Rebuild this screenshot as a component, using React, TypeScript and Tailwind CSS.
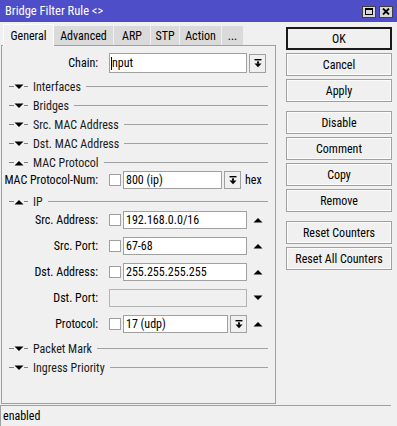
import React from "react";

const font = { fontFamily: '"Roboto Condensed", "Liberation Sans", Arial, sans-serif' };

function DropIcon() {
  return (
    <svg width="8" height="9" viewBox="0 0 8 9">
      <rect x="0.5" y="0" width="7" height="1.4" fill="#000" />
      <rect x="3" y="2.4" width="2" height="2.2" fill="#000" />
      <polygon points="0.5,4.4 7.5,4.4 4,8.2" fill="#000" />
    </svg>
  );
}

function Tri({ up }: { up?: boolean }) {
  return (
    <svg width="10" height="6" viewBox="0 0 10 6">
      {up ? (
        <polygon points="0.5,5.5 9.5,5.5 5,1" fill="#000" />
      ) : (
        <polygon points="0.5,0.5 9.5,0.5 5,5" fill="#000" />
      )}
    </svg>
  );
}

function DropBtn() {
  return (
    <div className="w-[17px] h-[19px] border border-[#a0a0a0] bg-[#f0f0f0] flex items-center justify-center shrink-0">
      <DropIcon />
    </div>
  );
}

function Section({ label, open }: { label: string; open?: boolean }) {
  return (
    <div className="h-[19px] flex items-center pl-[7px] pr-[7px]">
      <div className="w-[5px] h-px bg-[#808080]" />
      <Tri up={open} />
      <div className="w-[4px] h-px bg-[#808080]" />
      <span className="ml-[5px] text-[12px] text-[#1a1a1a] whitespace-nowrap">{label}</span>
      <div className="flex-1 h-px bg-[#a0a0a0] ml-[5px]" />
    </div>
  );
}

function Check() {
  return <div className="w-[12px] h-[12px] border border-[#a0a0a0] bg-white shrink-0" />;
}

function Field({
  label,
  value,
  check = true,
  width,
  disabled,
  drop,
  tri,
}: {
  label: string;
  value?: string;
  check?: boolean;
  width: string;
  disabled?: boolean;
  drop?: boolean;
  tri?: "up" | "down";
}) {
  return (
    <div className="h-[18px] flex items-center">
      <div className="w-[97px] text-right text-[12px] pr-[1px] whitespace-nowrap">{label}</div>
      <div className="ml-[10px] flex items-center">
        {check && <Check />}
        <div
          className={`${width} h-[18px] border ${
            disabled ? "bg-[#f0f0f0] border-[#b4b4b4]" : "bg-white border-[#a0a0a0]"
          } ${check ? "ml-[2px]" : ""} flex items-center pl-[2px] text-[12px] whitespace-nowrap`}
        >
          {value}
        </div>
        {drop && (
          <div className="ml-[2px] w-[17px] h-[18px] border border-[#a0a0a0] bg-[#f0f0f0] flex items-center justify-center">
            <DropIcon />
          </div>
        )}
        {tri && (
          <div className="ml-[6px] w-[10px] flex items-center">
            <Tri up={tri === "up"} />
          </div>
        )}
      </div>
    </div>
  );
}

function Btn({ label, primary }: { label: string; primary?: boolean }) {
  return (
    <div
      className={`h-[23px] w-[106px] flex items-center justify-center text-[12px] bg-[#f0f0f0] whitespace-nowrap ${
        primary ? "border-2 border-[#1a1a1a]" : "border border-[#a0a0a0] shadow-[inset_0_0_0_1px_#fcfcfc]"
      }`}
    >
      {label}
    </div>
  );
}

export default function App() {
  const tabs = ["General", "Advanced", "ARP", "STP", "Action", "..."];
  const tabW = ["w-[51px]", "w-[60px]", "w-[37px]", "w-[29px]", "w-[42px]", "w-[22px]"];

  return (
    <div className="w-[397px] h-[426px] bg-[#f0f0f0] flex flex-col overflow-hidden text-black" style={font}>
      {/* title bar */}
      <div className="h-[22px] bg-[#4e4ec8] flex items-center justify-between pl-[5px] pr-[4px] shrink-0">
        <span className="text-white text-[12.5px] whitespace-nowrap">Bridge Filter Rule &lt;&gt;</span>
        <div className="flex gap-[3px] mt-[1px]">
          <div className="w-[14px] h-[12px] bg-[#d8d8d8] border border-[#404040] flex items-center justify-center">
            <div className="w-[8px] h-[7px] border border-black border-t-2" />
          </div>
          <div className="w-[14px] h-[12px] bg-[#d8d8d8] border border-[#404040] flex items-center justify-center">
            <svg width="8" height="7" viewBox="0 0 8 7">
              <path d="M1 0.5 L7 6.5 M7 0.5 L1 6.5" stroke="#000" strokeWidth="1.8" />
            </svg>
          </div>
        </div>
      </div>

      <div className="flex flex-1 min-h-0">
        {/* left */}
        <div className="w-[275px] ml-[1px] mt-[1px] flex flex-col">
          <div className="flex items-end h-[22px] pl-[2px]">
            {tabs.map((t, i) => (
              <div
                key={t}
                className={`${tabW[i]} flex items-center justify-center text-[12px] whitespace-nowrap ${
                  i === 0
                    ? "h-[22px] bg-[#f0f0f0] border-t border-l border-r border-[#fcfcfc] -mb-px relative z-10"
                    : "h-[19px] bg-[#dadada] border-r border-[#f0f0f0]"
                }`}
              >
                {t}
              </div>
            ))}
          </div>
          <div className="h-[359px] border border-[#a0a0a0] bg-[#f0f0f0] pt-[7px]">
            {/* chain */}
            <div className="h-[20px] flex items-center">
              <div className="w-[97px] text-right text-[12px] pr-[1px]">Chain:</div>
              <div className="ml-[10px] w-[138px] h-[20px] border border-[#a0a0a0] bg-white flex items-center text-[12px]">
                <span className="w-px h-[13px] bg-black ml-[1px]" />
                <span>nput</span>
              </div>
              <div className="ml-[2px]">
                <DropBtn />
              </div>
            </div>
            <div className="mt-[4px]">
              <Section label="Interfaces" />
              <Section label="Bridges" />
              <Section label="Src. MAC Address" />
              <Section label="Dst. MAC Address" />
              <Section label="MAC Protocol" open />
            </div>
            <div className="h-[18px] flex items-center -mt-px">
              <div className="w-[97px] text-right text-[12px] pr-[1px] whitespace-nowrap">MAC Protocol-Num:</div>
              <div className="ml-[10px] flex items-center">
                <Check />
                <div className="ml-[2px] w-[99px] h-[18px] border border-[#a0a0a0] bg-white flex items-center pl-[2px] text-[12px]">
                  800 (ip)
                </div>
                <div className="ml-[2px] w-[17px] h-[18px] border border-[#a0a0a0] bg-[#f0f0f0] flex items-center justify-center">
                  <DropIcon />
                </div>
                <span className="ml-[4px] text-[12px]">hex</span>
              </div>
            </div>
            <div className="mt-[3px]">
              <Section label="IP" open />
            </div>
            <div className="flex flex-col gap-[8px]">
              <Field label="Src. Address:" value="192.168.0.0/16" width="w-[124px]" tri="up" />
              <Field label="Src. Port:" value="67-68" width="w-[124px]" tri="up" />
              <Field label="Dst. Address:" value="255.255.255.255" width="w-[124px]" tri="up" />
              <Field label="Dst. Port:" check={false} disabled width="w-[138px]" tri="down" />
              <Field label="Protocol:" value="17 (udp)" width="w-[105px]" drop tri="up" />
            </div>
            <div className="mt-[6px]">
              <Section label="Packet Mark" />
              <Section label="Ingress Priority" />
            </div>
          </div>
        </div>

        {/* right buttons */}
        <div className="ml-[10px] mt-[5px] flex flex-col">
          <div className="flex flex-col gap-[3px]">
            <Btn label="OK" primary />
            <Btn label="Cancel" />
            <Btn label="Apply" />
          </div>
          <div className="flex flex-col gap-[3px] mt-[9px]">
            <Btn label="Disable" />
            <Btn label="Comment" />
            <Btn label="Copy" />
            <Btn label="Remove" />
          </div>
          <div className="flex flex-col gap-[3px] mt-[9px]">
            <Btn label="Reset Counters" />
            <Btn label="Reset All Counters" />
          </div>
        </div>
      </div>

      {/* status bar */}
      <div className="h-[21px] mt-[1px] mr-[6px] border-t border-l border-[#a0a0a0] flex items-center pl-[2px] text-[12px] shrink-0">
        enabled
      </div>
    </div>
  );
}
